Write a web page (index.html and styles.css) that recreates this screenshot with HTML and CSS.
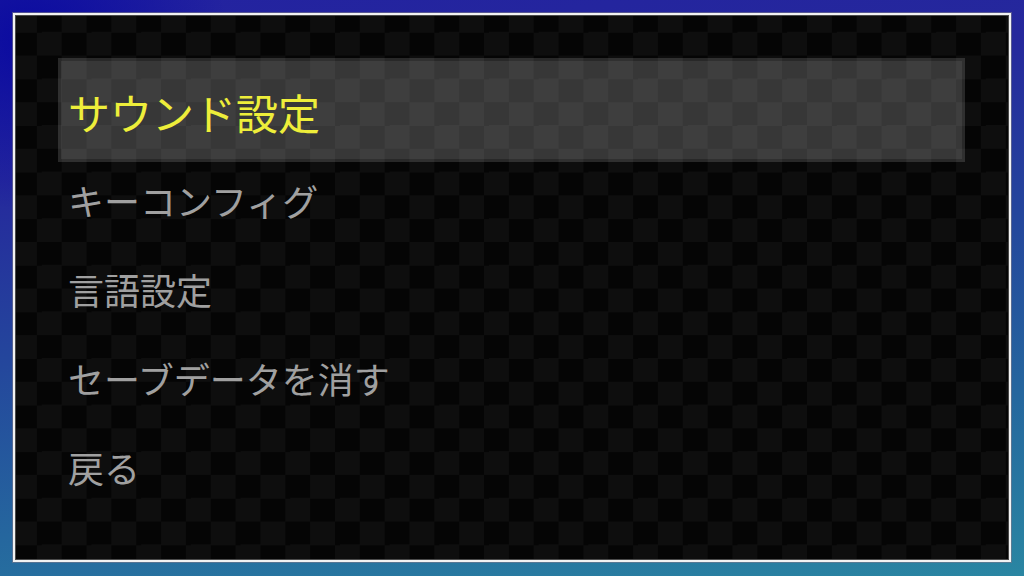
FILE: index.html
```html
<!DOCTYPE html>
<html lang="ja">
<head>
    <meta charset="UTF-8">
    <meta name="viewport" content="width=device-width, initial-scale=1.0">
    <title>オプション</title>
    <link rel="stylesheet" href="styles.css">
</head>
<body>
    <div class="screen">
        <div class="panel">
            <ul class="menu">
                <li class="menu-item selected">サウンド設定</li>
                <li class="menu-item">キーコンフィグ</li>
                <li class="menu-item">言語設定</li>
                <li class="menu-item">セーブデータを消す</li>
                <li class="menu-item">戻る</li>
            </ul>
        </div>
    </div>
</body>
</html>
```

FILE: styles.css
```css
html, body {
    margin: 0;
    padding: 0;
    height: 100%;
}
body {
    font-family: "Noto Sans CJK JP", "Noto Sans", sans-serif;
    background-color: #22309e;
    background-image:
        radial-gradient(ellipse 200px 170px at 30px 40px, rgba(6, 6, 160, 0.85), rgba(6, 6, 160, 0) 100%),
        linear-gradient(172deg, #2322a0 0%, #25289c 25%, #24469c 50%, #25679e 75%, #2a86a2 100%);
    overflow: hidden;
}
.screen {
    height: 100%;
    box-sizing: border-box;
    padding: 13px 13px 14px 13px;
    display: flex;
}
/* dark checkered window with a white frame */
.panel {
    flex: 1;
    border: 2px solid #f2f2f2;
    box-shadow: 0 0 0 1px rgba(120, 120, 140, 0.6), inset 0 0 0 1px #4a4a4a;
    background-color: #060606;
    background-image: conic-gradient(#050505 25%, #0e0e0e 0 50%, #050505 0 75%, #0e0e0e 0);
    background-size: 49.7px 46.6px;
    background-position: -3px -6px;
    padding: 51px 44px 0 43px;
}
.menu {
    list-style: none;
    margin: 0;
    padding: 0;
}
.menu-item {
    height: 89px;
    display: flex;
    align-items: center;
    box-sizing: border-box;
    padding-left: 10px;
    font-size: 36px;
    line-height: 1;
    color: #a0a0a0;
}
.menu-item.selected {
    height: 104px;
    margin: -8px 0 -7px 0;
    padding: 4px 0 0 7px;
    border: 3px solid rgba(255, 255, 255, 0.14);
    background-color: rgba(255, 255, 255, 0.2);
    background-clip: padding-box;
    font-size: 42px;
    color: #eeee3a;
}
```
